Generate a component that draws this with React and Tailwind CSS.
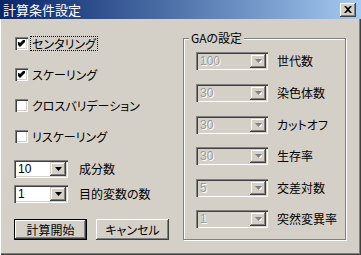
import React from "react";

const FONT = "font-['Noto_Sans_CJK_JP','Noto_Sans',sans-serif] [font-feature-settings:'palt']";

function Arrow({ disabled }) {
  return (
    <svg width="7" height="4" viewBox="0 0 7 4" className="block">
      {disabled && <path d="M1 1h7L4.5 5z" fill="#ffffff" />}
      <path d="M0 0h7L3.5 4z" fill={disabled ? "#808080" : "#000000"} />
    </svg>
  );
}

function Combo({ value, width, disabled }) {
  return (
    <div
      className={`h-[18px] flex items-stretch p-[2px] ${disabled ? "bg-[#d4d0c8]" : "bg-white"} shadow-[inset_1px_1px_0_#808080,inset_2px_2px_0_#404040,inset_-1px_-1px_0_#ffffff,inset_-2px_-2px_0_#d4d0c8]`}
      style={{ width }}
    >
      <div
        className={`flex-1 pl-[2px] text-[12px] leading-[14px] font-['Liberation_Sans',sans-serif] ${disabled ? "text-[#9a9a9a] [text-shadow:1px_1px_0_#ffffff]" : "text-black"}`}
      >
        {value}
      </div>
      <div className="w-[16px] flex items-center justify-center bg-[#d4d0c8] shadow-[inset_-1px_-1px_0_#404040,inset_1px_1px_0_#d4d0c8,inset_-2px_-2px_0_#808080,inset_2px_2px_0_#ffffff]">
        <Arrow disabled={disabled} />
      </div>
    </div>
  );
}

function Check({ checked }) {
  return (
    <div className="w-[13px] h-[13px] bg-white flex items-center justify-center shadow-[inset_1px_1px_0_#808080,inset_2px_2px_0_#404040,inset_-1px_-1px_0_#ffffff,inset_-2px_-2px_0_#d4d0c8]">
      {checked && (
        <svg width="7" height="7" viewBox="0 0 7 7" className="block">
          <path d="M0 2h1l1 1 4-4h1v3L2 7 0 5z" fill="#000" />
        </svg>
      )}
    </div>
  );
}

function CheckRow({ label, checked, focus }) {
  return (
    <div className="h-[15px] flex items-center pl-[1px]">
      <Check checked={checked} />
      <span
        className={`ml-[2px] px-[2px] h-[15px] flex items-center text-[12px] leading-[13px] text-black ${focus ? "outline outline-1 outline-dotted outline-black -outline-offset-1" : ""}`}
      >
        {label}
      </span>
    </div>
  );
}

function Button({ children, isDefault }) {
  return (
    <div
      className={`w-[73px] h-[21px] flex items-center justify-center text-[12px] text-black bg-[#d4d0c8] ${
        isDefault
          ? "shadow-[inset_0_0_0_1px_#000000,inset_-2px_-2px_0_#404040,inset_2px_2px_0_#ffffff,inset_-3px_-3px_0_#808080]"
          : "shadow-[inset_-1px_-1px_0_#404040,inset_1px_1px_0_#ffffff,inset_-2px_-2px_0_#808080,inset_2px_2px_0_#d4d0c8]"
      }`}
    >
      {children}
    </div>
  );
}

const gaRows = [
  ["100", "世代数"],
  ["30", "染色体数"],
  ["30", "カットオフ"],
  ["30", "生存率"],
  ["5", "交差対数"],
  ["1", "突然変異率"],
];
const gaGaps = ["mt-0", "mt-[14px]", "mt-[14px]", "mt-[13px]", "mt-[14px]", "mt-[13px]"];

export default function App() {
  return (
    <div className={`w-[361px] h-[255px] bg-[#d4d0c8] flex flex-col overflow-hidden ${FONT}`}>
      <div className="h-[19px] shrink-0 flex items-center pl-[3px] pr-[5px] bg-gradient-to-r from-[#0a246a] to-[#a6caf0]">
        <span className="text-white text-[13px] leading-[15px]">計算条件設定</span>
        <div className="ml-auto w-[16px] h-[14px] flex items-center justify-center bg-[#d4d0c8] shadow-[inset_-1px_-1px_0_#404040,inset_1px_1px_0_#ffffff,inset_-2px_-2px_0_#808080,inset_2px_2px_0_#d4d0c8]">
          <svg width="8" height="7" viewBox="0 0 8 7" className="block">
            <path d="M0 0h2l2 2 2-2h2L5 3.5 8 7H6L4 5 2 7H0l3-3.5z" fill="#000" />
          </svg>
        </div>
      </div>
      <div className="flex-1 flex shadow-[inset_1px_0_0_#ffffff,inset_-1px_-1px_0_#404040,inset_-2px_-2px_0_#808080]">
        <div className="w-[183px] shrink-0 pl-[14px] pt-[17px] flex flex-col">
          <CheckRow label="センタリング" checked focus />
          <div className="mt-[16px]"><CheckRow label="スケーリング" checked /></div>
          <div className="mt-[16px]"><CheckRow label="クロスバリデーション" /></div>
          <div className="mt-[16px]"><CheckRow label="リスケーリング" /></div>
          <div className="mt-[16px] flex items-center">
            <Combo value="10" width={54} />
            <span className="ml-[11px] text-[12px] text-black">成分数</span>
          </div>
          <div className="mt-[7px] flex items-center">
            <Combo value="1" width={54} />
            <span className="ml-[11px] text-[12px] text-black">目的変数の数</span>
          </div>
          <div className="mt-[16px] flex gap-[9px]">
            <Button isDefault>計算開始</Button>
            <Button>キャンセル</Button>
          </div>
        </div>
        <div className="pt-[19px]">
          <div className="relative w-[163px] h-[202px] border border-[#808080] shadow-[1px_1px_0_#ffffff,inset_1px_1px_0_#ffffff] pl-[12px] pt-[13px] flex flex-col">
            <span className="absolute left-[5px] top-[-9px] px-[2px] bg-[#d4d0c8] text-[12px] leading-[16px] text-black">
              GAの設定
            </span>
            {gaRows.map(([v, l], i) => (
              <div key={l} className={`flex items-center ${gaGaps[i]}`}>
                <Combo value={v} width={72} disabled />
                <span className="ml-[9px] text-[12px] text-black">{l}</span>
              </div>
            ))}
          </div>
        </div>
      </div>
    </div>
  );
}
